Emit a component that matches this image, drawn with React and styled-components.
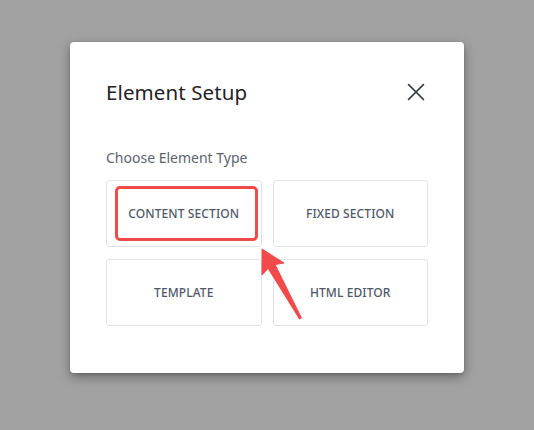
import React from "react";
import styled, { createGlobalStyle } from "styled-components";

const Global = createGlobalStyle`
  html, body { margin: 0; padding: 0; }
  body {
    background: #a2a2a2;
    width: 534px;
    height: 430px;
    overflow: hidden;
    font-family: "Noto Sans", "Open Sans", sans-serif;
  }
`;

const Backdrop = styled.div`
  padding: 42px 0 0 70px;
`;

const Modal = styled.div`
  width: 394px;
  height: 331px;
  box-sizing: border-box;
  background: #ffffff;
  border-radius: 4px;
  box-shadow: 0 4px 12px rgba(0, 0, 0, 0.35), 0 1px 3px rgba(0, 0, 0, 0.15);
  padding: 36px 36px 0 36px;
`;

const Header = styled.div`
  display: flex;
  align-items: center;
  justify-content: space-between;
  height: 28px;
`;

const Title = styled.h2`
  margin: 0;
  font-size: 20.5px;
  font-weight: 400;
  color: #1f2326;
  line-height: 28px;
  letter-spacing: 0.1px;
`;

const Close = styled.button`
  width: 20px;
  height: 20px;
  padding: 0;
  margin-right: 2px;
  border: none;
  background: none;
  display: flex;
  align-items: center;
  justify-content: center;
  cursor: pointer;
`;

const Label = styled.div`
  margin-top: 42px;
  font-size: 14px;
  line-height: 20px;
  color: #5c6370;
`;

const Grid = styled.div`
  position: relative;
  margin-top: 12px;
  display: grid;
  grid-template-columns: 1fr 1fr;
  column-gap: 11px;
  row-gap: 12px;
`;

const Card = styled.div`
  position: relative;
  height: 67px;
  box-sizing: border-box;
  border: 1px solid #dfe4ea;
  border-radius: 3px;
  display: flex;
  align-items: center;
  justify-content: center;
  font-size: 12px;
  font-weight: 500;
  color: #505869;
  letter-spacing: 0.1px;
`;

const Highlight = styled.div`
  position: absolute;
  left: 8px;
  top: 5px;
  right: 3px;
  bottom: 5px;
  border: 3px solid #f24a4a;
  border-radius: 5px;
  pointer-events: none;
`;

const Arrow = styled.svg`
  position: absolute;
  left: 154px;
  top: 67px;
  width: 44px;
  height: 76px;
  overflow: visible;
  pointer-events: none;
`;

const options = [
  { label: "CONTENT SECTION", highlighted: true },
  { label: "FIXED SECTION" },
  { label: "TEMPLATE" },
  { label: "HTML EDITOR" },
];

export default function App() {
  return (
    <>
      <Global />
      <Backdrop>
        <Modal>
          <Header>
            <Title>Element Setup</Title>
            <Close aria-label="Close">
              <svg width="18" height="18" viewBox="0 0 18 18">
                <path
                  d="M1.5 1.5 L16.5 16.5 M16.5 1.5 L1.5 16.5"
                  stroke="#2b2f33"
                  strokeWidth="1.6"
                  strokeLinecap="round"
                />
              </svg>
            </Close>
          </Header>
          <Label>Choose Element Type</Label>
          <Grid>
            {options.map((o) => (
              <Card key={o.label}>
                {o.label}
                {o.highlighted && <Highlight />}
              </Card>
            ))}
            <Arrow viewBox="0 0 44 76">
              <polygon
                points="2,2 24,16 15.1,17.6 41.5,71 39.5,72 8.1,21.4 2,28"
                fill="#f24a4a"
                stroke="#f24a4a"
                strokeWidth="1"
                strokeLinejoin="round"
              />
            </Arrow>
          </Grid>
        </Modal>
      </Backdrop>
    </>
  );
}
